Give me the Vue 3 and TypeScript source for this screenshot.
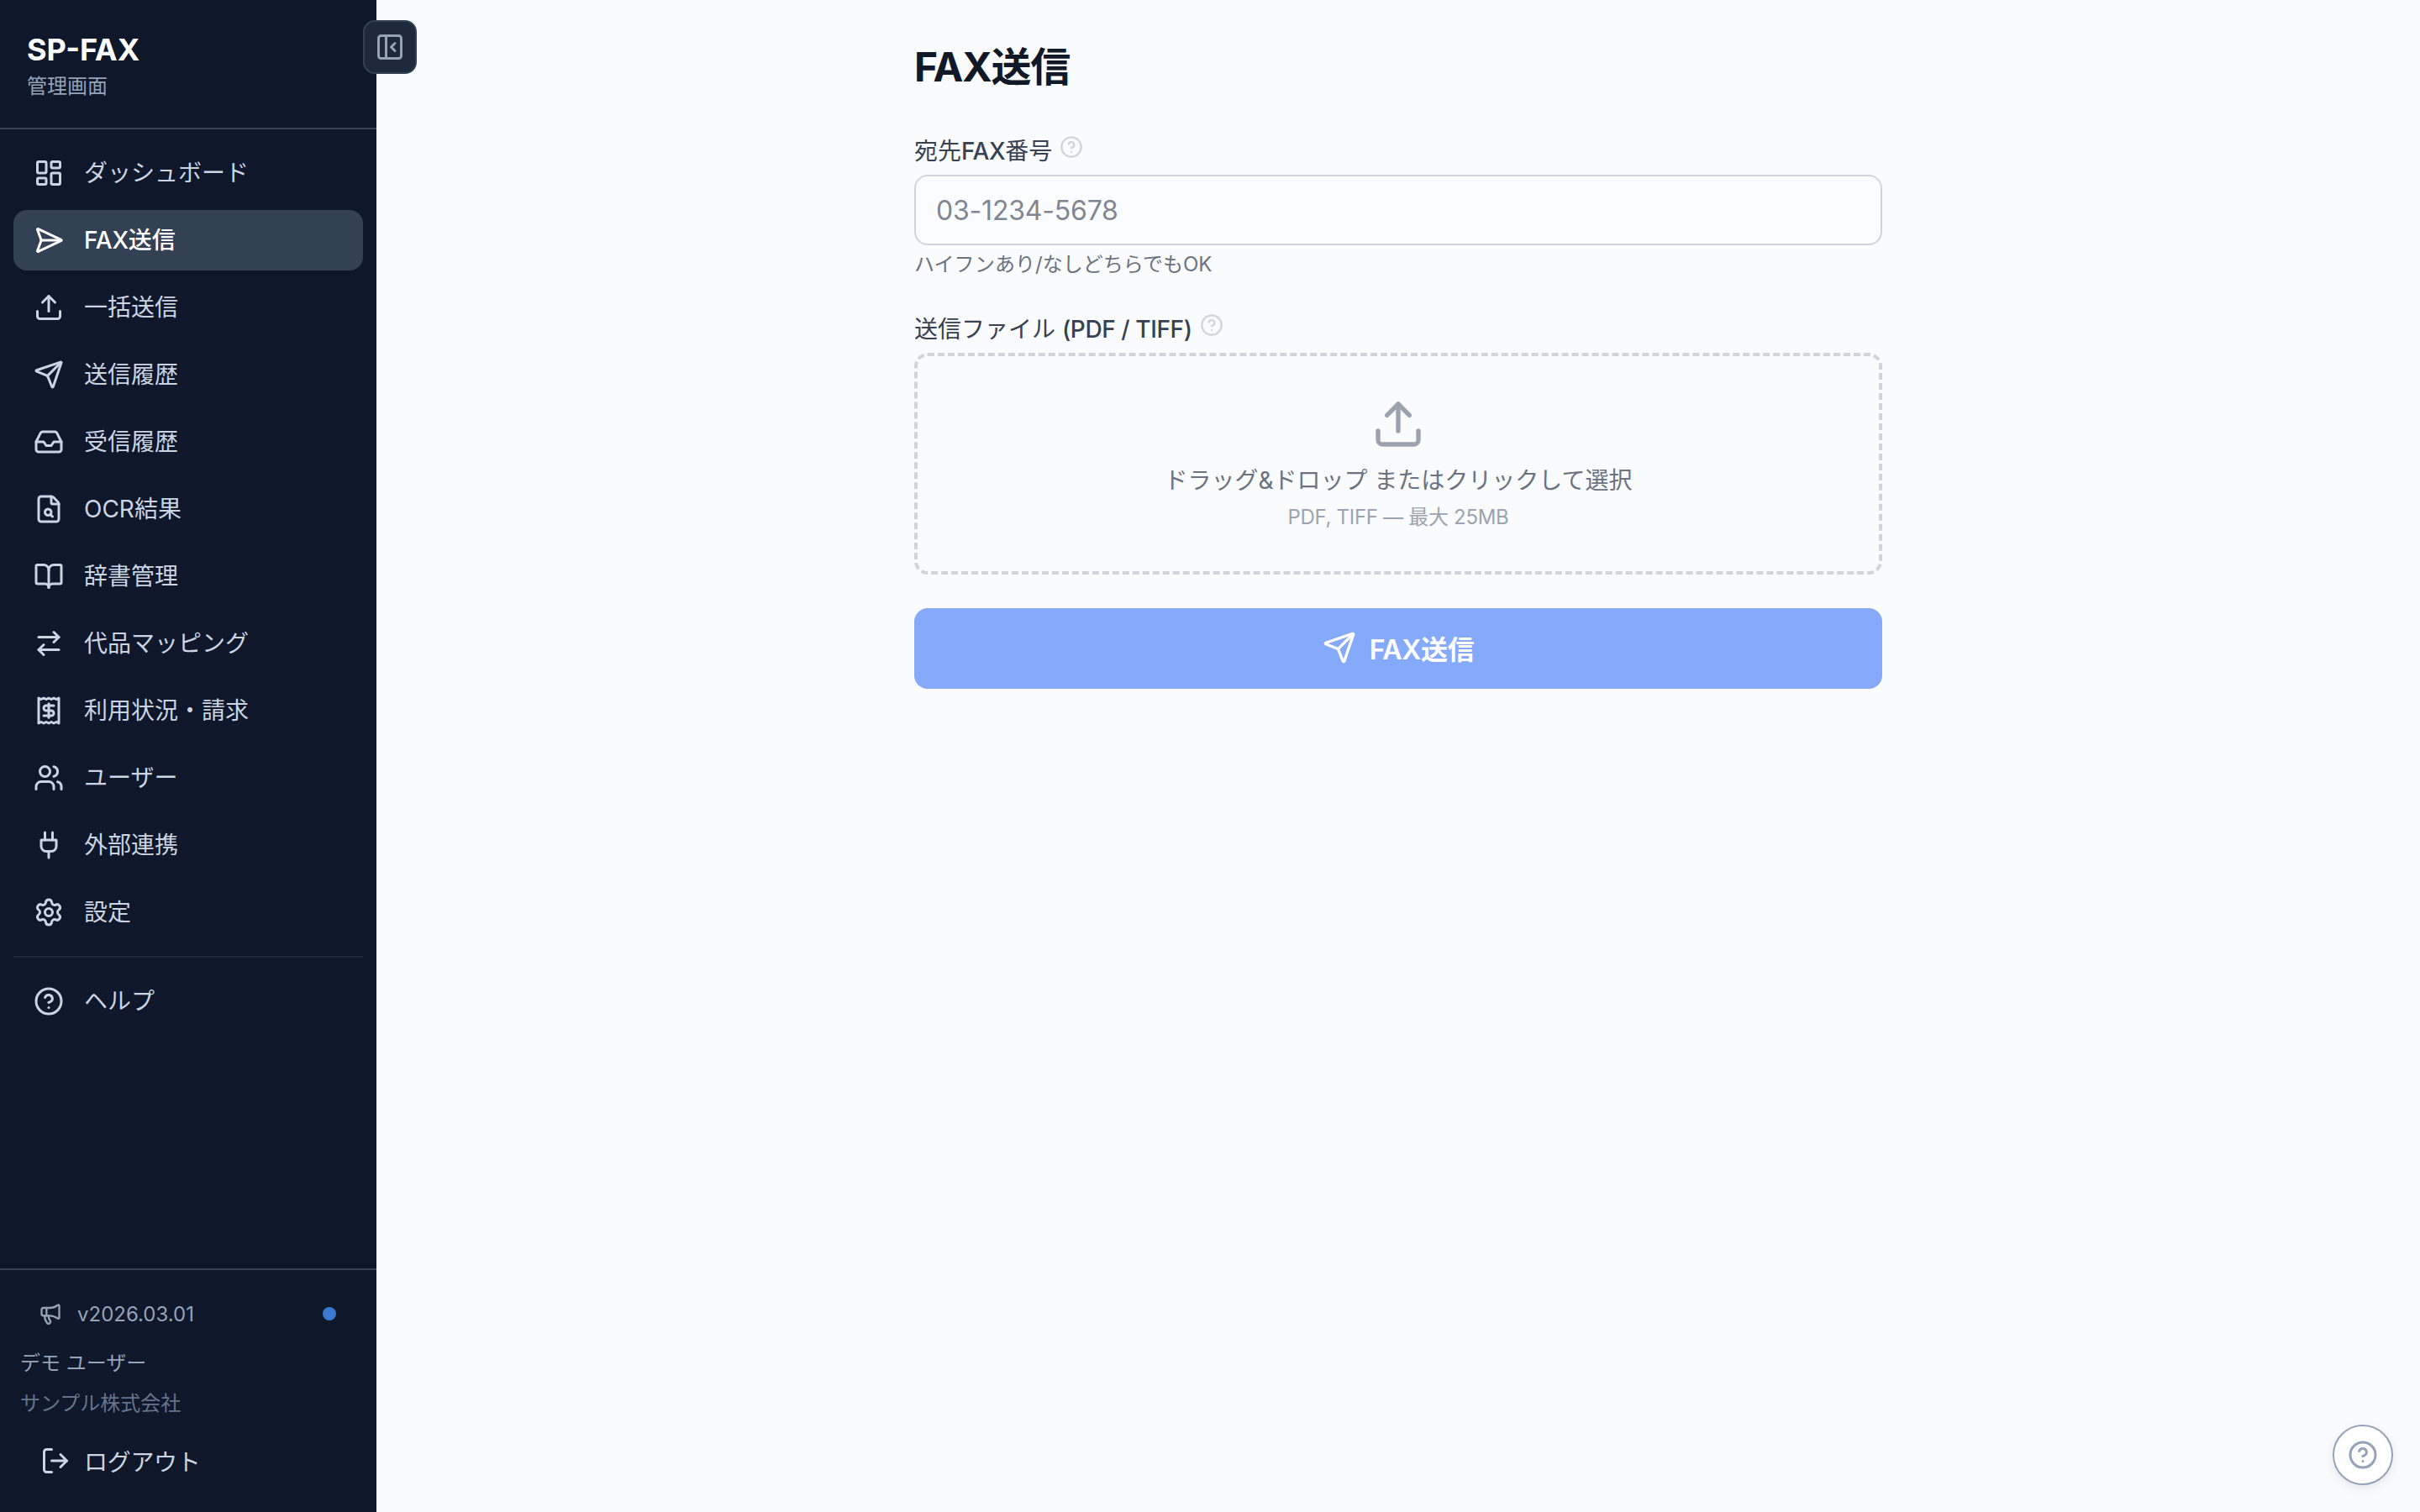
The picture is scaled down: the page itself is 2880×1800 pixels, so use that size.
<script setup lang="ts">
interface NavItem {
  label: string
  paths: string[]
  active?: boolean
}

const circle = (cx: number, cy: number, r: number) =>
  `M${cx - r} ${cy}a${r} ${r} 0 1 0 ${r * 2} 0a${r} ${r} 0 1 0 ${-r * 2} 0`
const rect = (x: number, y: number, w: number, h: number) =>
  `M${x + 1} ${y}h${w - 2}a1 1 0 0 1 1 1v${h - 2}a1 1 0 0 1-1 1h${-(w - 2)}a1 1 0 0 1-1-1v${-(h - 2)}a1 1 0 0 1 1-1z`

const sendIcon = [
  'M14.536 21.686a.5.5 0 0 0 .937-.024l6.5-19a.496.496 0 0 0-.635-.635l-19 6.5a.5.5 0 0 0-.024.937l7.93 3.18a2 2 0 0 1 1.112 1.11z',
  'm21.854 2.147-10.94 10.939',
]
const uploadIcon = ['M12 3v12', 'm17 8-5-5-5 5', 'M21 15v4a2 2 0 0 1-2 2H5a2 2 0 0 1-2-2v-4']
const helpIcon = [circle(12, 12, 10), 'M9.09 9a3 3 0 0 1 5.83 1c0 2-3 3-3 3', 'M12 17h.01']

const navItems: NavItem[] = [
  { label: 'ダッシュボード', paths: [rect(3, 3, 7, 9), rect(14, 3, 7, 5), rect(14, 12, 7, 9), rect(3, 16, 7, 5)] },
  {
    label: 'FAX送信',
    active: true,
    paths: [
      'M3.714 3.048a.498.498 0 0 0-.683.627l2.843 7.627a2 2 0 0 1 0 1.396l-2.842 7.627a.498.498 0 0 0 .682.627l18-8.5a.5.5 0 0 0 0-.904z',
      'M6 12h16',
    ],
  },
  { label: '一括送信', paths: uploadIcon },
  { label: '送信履歴', paths: sendIcon },
  {
    label: '受信履歴',
    paths: [
      'M22 12H16L14 15H10L8 12H2',
      'M5.45 5.11 2 12v6a2 2 0 0 0 2 2h16a2 2 0 0 0 2-2v-6l-3.45-6.89A2 2 0 0 0 16.76 4H7.24a2 2 0 0 0-1.79 1.11z',
    ],
  },
  {
    label: 'OCR結果',
    paths: [
      'M6 22a2 2 0 0 1-2-2V4a2 2 0 0 1 2-2h8a2.4 2.4 0 0 1 1.704.706l3.588 3.588A2.4 2.4 0 0 1 20 8v12a2 2 0 0 1-2 2z',
      'M14 2v5a1 1 0 0 0 1 1h5',
      circle(11.5, 14.5, 2.5),
      'M13.3 16.3 15 18',
    ],
  },
  {
    label: '辞書管理',
    paths: [
      'M12 7v14',
      'M3 18a1 1 0 0 1-1-1V4a1 1 0 0 1 1-1h5a4 4 0 0 1 4 4 4 4 0 0 1 4-4h5a1 1 0 0 1 1 1v13a1 1 0 0 1-1 1h-6a3 3 0 0 0-3 3 3 3 0 0 0-3-3z',
    ],
  },
  { label: '代品マッピング', paths: ['m16 3 4 4-4 4', 'M20 7H4', 'm8 21-4-4 4-4', 'M4 17h16'] },
  {
    label: '利用状況・請求',
    paths: [
      'M4 2v20l2-1 2 1 2-1 2 1 2-1 2 1 2-1 2 1V2l-2 1-2-1-2 1-2-1-2 1-2-1-2 1Z',
      'M16 8h-6a2 2 0 1 0 0 4h4a2 2 0 1 1 0 4H8',
      'M12 17.5v-11',
    ],
  },
  {
    label: 'ユーザー',
    paths: [
      'M16 21v-2a4 4 0 0 0-4-4H6a4 4 0 0 0-4 4v2',
      circle(9, 7, 4),
      'M22 21v-2a4 4 0 0 0-3-3.87',
      'M16 3.13a4 4 0 0 1 0 7.75',
    ],
  },
  {
    label: '外部連携',
    paths: ['M12 22v-5', 'M9 8V2', 'M15 8V2', 'M18 8v5a4 4 0 0 1-4 4h-4a4 4 0 0 1-4-4V8Z'],
  },
  {
    label: '設定',
    paths: [
      'M9.671 4.136a2.34 2.34 0 0 1 4.659 0 2.34 2.34 0 0 0 3.319 1.915 2.34 2.34 0 0 1 2.33 4.033 2.34 2.34 0 0 0 0 3.831 2.34 2.34 0 0 1-2.33 4.033 2.34 2.34 0 0 0-3.319 1.915 2.34 2.34 0 0 1-4.659 0 2.34 2.34 0 0 0-3.32-1.915 2.34 2.34 0 0 1-2.33-4.033 2.34 2.34 0 0 0 0-3.831A2.34 2.34 0 0 1 6.35 6.051a2.34 2.34 0 0 0 3.319-1.915',
      circle(12, 12, 3),
    ],
  },
]
</script>

<template>
  <div class="shell">
    <aside class="sidebar">
      <header class="brand">
        <div class="brand-name">SP-FAX</div>
        <div class="brand-sub">管理画面</div>
      </header>
      <button class="collapse" type="button" aria-label="サイドバーを閉じる">
        <svg class="icon" viewBox="0 0 24 24">
          <rect x="3" y="3" width="18" height="18" rx="2" />
          <path d="M9 3v18" />
          <path d="m16 15-3-3 3-3" />
        </svg>
      </button>

      <nav class="nav">
        <a v-for="item in navItems" :key="item.label" class="nav-item" :class="{ active: item.active }">
          <svg class="icon" viewBox="0 0 24 24">
            <path v-for="d in item.paths" :key="d" :d="d" />
          </svg>
          <span>{{ item.label }}</span>
        </a>
        <div class="nav-divider"></div>
        <a class="nav-item">
          <svg class="icon" viewBox="0 0 24 24">
            <path v-for="d in helpIcon" :key="d" :d="d" />
          </svg>
          <span>ヘルプ</span>
        </a>
      </nav>

      <footer class="side-footer">
        <div class="version">
          <svg class="version-icon" viewBox="0 0 24 24">
            <path d="M11 6a13 13 0 0 0 8.4-2.8A1 1 0 0 1 21 4v12a1 1 0 0 1-1.6.8A13 13 0 0 0 11 14H5a2 2 0 0 1-2-2V8a2 2 0 0 1 2-2z" />
            <path d="M6 14a12 12 0 0 0 2.4 7.2 2 2 0 0 0 3.2-2.4A8 8 0 0 1 10 14" />
            <path d="M8 6v8" />
          </svg>
          <span>v2026.03.01</span>
          <span class="version-dot"></span>
        </div>
        <div class="user-name">デモ ユーザー</div>
        <div class="user-org">サンプル株式会社</div>
        <a class="logout">
          <svg class="icon" viewBox="0 0 24 24">
            <path d="m16 17 5-5-5-5" />
            <path d="M21 12H9" />
            <path d="M9 21H5a2 2 0 0 1-2-2V5a2 2 0 0 1 2-2h4" />
          </svg>
          <span>ログアウト</span>
        </a>
      </footer>
    </aside>

    <main class="main">
      <form class="form" @submit.prevent>
        <h1>FAX送信</h1>

        <div class="field">
          <label class="label" for="fax-number">
            <span>宛先<b>FAX</b>番号</span>
            <svg class="hint-icon" viewBox="0 0 24 24">
              <path v-for="d in helpIcon" :key="d" :d="d" />
            </svg>
          </label>
          <input id="fax-number" type="text" placeholder="03-1234-5678" autocomplete="off" />
          <p class="hint">ハイフンあり/なしどちらでもOK</p>
        </div>

        <div class="field">
          <label class="label">
            <span>送信ファイル <b>(PDF / TIFF)</b></span>
            <svg class="hint-icon" viewBox="0 0 24 24">
              <path v-for="d in helpIcon" :key="d" :d="d" />
            </svg>
          </label>
          <div class="dropzone">
            <svg class="drop-icon" viewBox="0 0 24 24">
              <path v-for="d in uploadIcon" :key="d" :d="d" />
            </svg>
            <p class="drop-text">ドラッグ&amp;ドロップ またはクリックして選択</p>
            <p class="drop-sub">PDF, TIFF — 最大 25MB</p>
          </div>
        </div>

        <button class="submit" type="submit">
          <svg class="submit-icon" viewBox="0 0 24 24">
            <path v-for="d in sendIcon" :key="d" :d="d" />
          </svg>
          FAX送信
        </button>
      </form>
    </main>

    <button class="help-fab" type="button" aria-label="ヘルプ">
      <svg class="icon" viewBox="0 0 24 24">
        <path v-for="d in helpIcon" :key="d" :d="d" />
      </svg>
    </button>
  </div>
</template>

<style>
html,
body {
  margin: 0;
  background: #f9fbfd;
}
</style>

<style scoped>
.shell {
  position: relative;
  display: flex;
  width: 2880px;
  height: 1800px;
  overflow: hidden;
  font-family: Inter, "Noto Sans CJK JP", sans-serif;
  background: #f9fbfd;
}

svg {
  flex: none;
  fill: none;
  stroke: currentColor;
  stroke-width: 2;
  stroke-linecap: round;
  stroke-linejoin: round;
}

.icon {
  width: 36px;
  height: 36px;
}

.sidebar {
  position: relative;
  display: flex;
  flex-direction: column;
  flex: none;
  width: 448px;
  background: #0f172a;
  color: #cbd5e1;
}

.brand {
  height: 154px;
  box-sizing: border-box;
  padding: 35px 32px 0;
  border-bottom: 2px solid #374151;
}

.brand-name {
  font-size: 36px;
  line-height: 48px;
  font-weight: 700;
  color: #fff;
}

.brand-sub {
  font-size: 24px;
  line-height: 40px;
  color: #94a3b8;
}

.collapse {
  position: absolute;
  top: 24px;
  left: 432px;
  display: flex;
  align-items: center;
  justify-content: center;
  width: 64px;
  height: 64px;
  padding: 0;
  border: 2px solid #334155;
  border-radius: 14px;
  background: #1e293b;
  color: #94a3b8;
}

.nav {
  display: flex;
  flex-direction: column;
  gap: 8px;
  padding: 16px 16px 0;
}

.nav-item {
  display: flex;
  align-items: center;
  gap: 24px;
  height: 72px;
  padding-left: 24px;
  border-radius: 16px;
  font-size: 28px;
}

.nav-item span {
  padding-bottom: 4px;
}

.nav-item.active {
  background: #334155;
  color: #fff;
  font-weight: 500;
  letter-spacing: -0.2px;
}

.nav-divider {
  height: 2px;
  margin: 8px 0;
  background: #1e293b;
}

.side-footer {
  margin-top: auto;
  height: 290px;
  box-sizing: border-box;
  border-top: 2px solid #334155;
  padding: 0 24px;
}

.version {
  display: flex;
  align-items: center;
  height: 52px;
  margin-top: 26px;
  padding: 0 24px 0 22px;
  font-size: 24px;
  color: #94a3b8;
}

.version-icon {
  width: 28px;
  height: 28px;
  margin-right: 18px;
}

.version-dot {
  width: 16px;
  height: 16px;
  margin-left: auto;
  border-radius: 50%;
  background: #3b7ad0;
}

.user-name {
  margin-top: 13px;
  font-size: 24px;
  line-height: 40px;
  color: #94a3b8;
}

.user-org {
  margin-top: 8px;
  font-size: 24px;
  line-height: 40px;
  color: #64748b;
}

.logout {
  display: flex;
  align-items: center;
  gap: 16px;
  height: 56px;
  margin-top: 20px;
  padding-left: 24px;
  font-size: 28px;
  letter-spacing: -0.3px;
}

.main {
  flex: 1;
  display: flex;
  justify-content: center;
}

.form {
  display: flex;
  flex-direction: column;
  width: 1152px;
}

h1 {
  margin: 48px 0 0;
  font-size: 48px;
  line-height: 64px;
  font-weight: 700;
  letter-spacing: -1.2px;
  color: #111827;
}

.field {
  margin-top: 46px;
}

.field + .field {
  margin-top: 39px;
}

.label {
  display: flex;
  align-items: center;
  gap: 9px;
  height: 40px;
  margin-bottom: 10px;
  font-size: 28px;
  color: #374151;
}

.label b {
  font-weight: 500;
  letter-spacing: -0.4px;
}

.hint-icon {
  width: 28px;
  height: 28px;
  margin-top: -6px;
  color: #d1d5db;
}

input {
  display: block;
  width: 100%;
  height: 84px;
  box-sizing: border-box;
  padding: 0 24px;
  border: 2px solid #d1d5db;
  border-radius: 16px;
  background: #fbfcfe;
  font: inherit;
  font-size: 32px;
  letter-spacing: -0.2px;
  color: #111827;
}

input::placeholder {
  color: #7f8692;
  opacity: 1;
}

.hint {
  margin: 7px 0 0;
  font-size: 24px;
  line-height: 32px;
  color: #6b7280;
}

.dropzone {
  display: flex;
  flex-direction: column;
  align-items: center;
  height: 264px;
  box-sizing: border-box;
  padding-top: 49px;
  border: 4px dashed #d1d5db;
  border-radius: 16px;
}

.drop-icon {
  width: 64px;
  height: 64px;
  color: #9ca3af;
}

.drop-text {
  margin: 15px 0 0;
  font-size: 28px;
  line-height: 40px;
  color: #6b7280;
}

.drop-sub {
  margin: 8px 0 0;
  font-size: 24px;
  line-height: 32px;
  letter-spacing: -0.3px;
  color: #9ca3af;
}

.submit {
  display: flex;
  align-items: center;
  justify-content: center;
  gap: 16px;
  height: 96px;
  margin-top: 40px;
  padding: 0 0 2px;
  border: none;
  border-radius: 16px;
  background: #85aafb;
  font: inherit;
  font-size: 32px;
  font-weight: 600;
  letter-spacing: -0.3px;
  color: #fff;
}

.submit-icon {
  width: 40px;
  height: 40px;
}

.help-fab {
  position: absolute;
  left: 2776px;
  top: 1696px;
  display: flex;
  align-items: center;
  justify-content: center;
  width: 72px;
  height: 72px;
  padding: 0;
  border: 2px solid #94a3b8;
  border-radius: 50%;
  background: #fff;
  color: #94a3b8;
  box-shadow: 0 4px 12px rgba(15, 23, 42, 0.08);
}
</style>
